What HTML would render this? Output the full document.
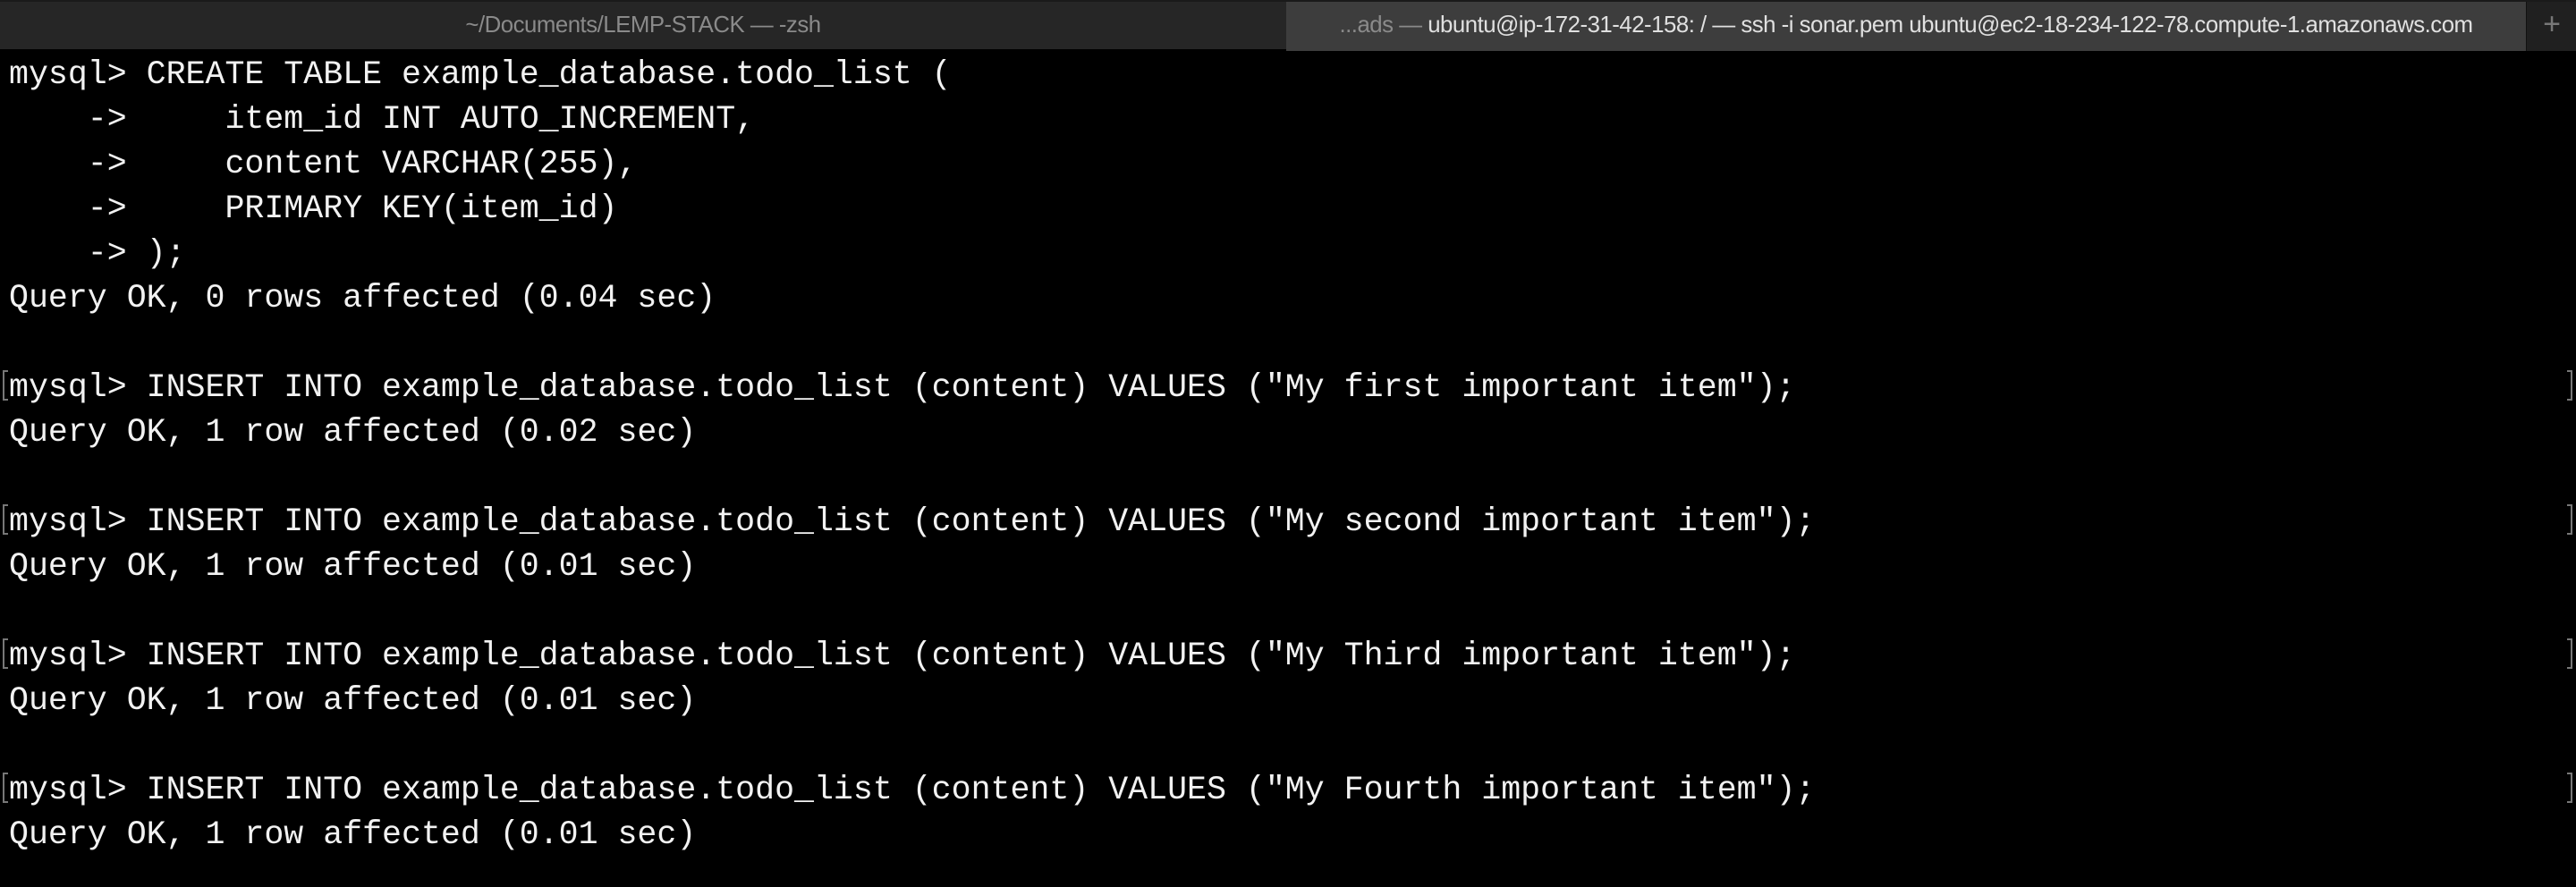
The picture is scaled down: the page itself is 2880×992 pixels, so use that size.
<!DOCTYPE html>
<html><head><style>
html,body{margin:0;padding:0;width:2880px;height:992px;background:#000;overflow:hidden}
.tabs{position:absolute;left:0;top:0;width:2880px;height:55px;background:#262626;border-top:2px solid #1a1a1a;box-sizing:border-box}
.t1{position:absolute;left:0;top:0;width:1438px;height:55px;color:#8a8a8a;font:25.8px "Liberation Sans",sans-serif;text-align:center;line-height:53px;letter-spacing:-0.5px}
.t2{position:absolute;left:1438px;top:0;width:1386px;height:55px;background:#3d3d3d;color:#e0e0e0;font:25.8px "Liberation Sans",sans-serif;text-align:center;line-height:53px;letter-spacing:-0.5px}
.t2 span{color:#8a8a8a}
.plus{position:absolute;left:2824px;top:0;width:56px;height:55px;background:#202020;color:#777;font:34px "Liberation Sans",sans-serif;text-align:center;line-height:50px;border-left:1px solid #111}
pre{position:absolute;left:10px;top:59px;margin:0;font:36.6px/50px "Liberation Mono",monospace;color:#f2f2f2}
.bl{position:absolute;left:3px;width:4px;height:30px;border:2px solid #777;border-right:none}
.br{position:absolute;left:2870px;width:4px;height:30px;border:2px solid #777;border-left:none}
</style></head><body>
<div class="tabs">
<div class="t1">~/Documents/LEMP-STACK — -zsh</div>
<div class="t2"><span>...ads — </span>ubuntu@ip-172-31-42-158: / — ssh -i sonar.pem ubuntu@ec2-18-234-122-78.compute-1.amazonaws.com</div>
<div class="plus">+</div>
</div>
<pre>mysql&gt; CREATE TABLE example_database.todo_list (
    -&gt;     item_id INT AUTO_INCREMENT,
    -&gt;     content VARCHAR(255),
    -&gt;     PRIMARY KEY(item_id)
    -&gt; );
Query OK, 0 rows affected (0.04 sec)

mysql&gt; INSERT INTO example_database.todo_list (content) VALUES ("My first important item");
Query OK, 1 row affected (0.02 sec)

mysql&gt; INSERT INTO example_database.todo_list (content) VALUES ("My second important item");
Query OK, 1 row affected (0.01 sec)

mysql&gt; INSERT INTO example_database.todo_list (content) VALUES ("My Third important item");
Query OK, 1 row affected (0.01 sec)

mysql&gt; INSERT INTO example_database.todo_list (content) VALUES ("My Fourth important item");
Query OK, 1 row affected (0.01 sec)</pre>
<div class="bl" style="top:414px"></div><div class="br" style="top:414px"></div>
<div class="bl" style="top:564px"></div><div class="br" style="top:564px"></div>
<div class="bl" style="top:714px"></div><div class="br" style="top:714px"></div>
<div class="bl" style="top:864px"></div><div class="br" style="top:864px"></div>
</body></html>
